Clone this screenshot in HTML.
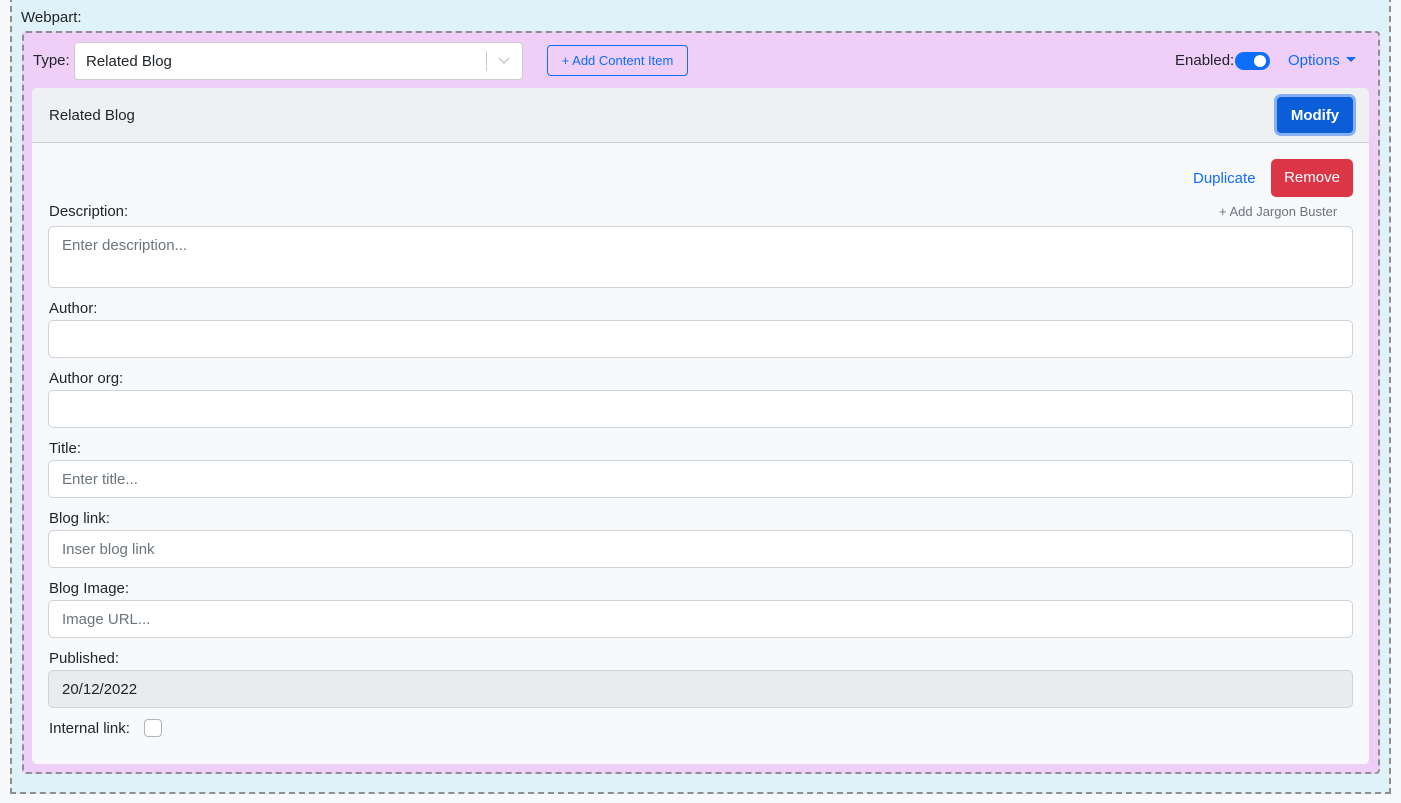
<!DOCTYPE html>
<html><head><meta charset="utf-8"><style>
*{box-sizing:border-box;margin:0;padding:0}
body{width:1401px;height:803px;background:#f8f9fa;font-family:"Liberation Sans",sans-serif;font-size:15px;color:#212529;position:relative;overflow:hidden}
.a{position:absolute}
.outer{left:10px;top:-4px;width:1381px;height:798px;border:2px dashed #8f8f8f;background:#e0f2f9}
.purple{left:22px;top:31px;width:1358px;height:743px;border:2px dashed #8f8f8f;border-radius:4px;background:#efcef8}
.card{left:32px;top:88px;width:1337px;height:676px;background:#f8f9fa;border-radius:5px;overflow:hidden}
.hdr{left:0;top:0;width:1337px;height:55px;background:#eff0f2;border-bottom:1px solid #ccc}
.inp{position:absolute;left:48px;width:1305px;height:38px;background:#fff;border:1px solid #ced4da;border-radius:5px;padding:10px 13px;color:#6c757d;font-size:15px}
.lbl{position:absolute;left:49px;font-size:15px}
</style></head><body>
<div class="a outer"></div>
<div class="a" style="left:21px;top:9px">Webpart:</div>
<div class="a purple"></div>
<div class="a" style="left:33px;top:52px">Type:</div>
<div class="a" style="left:74px;top:42px;width:449px;height:38px;background:#fff;border:1px solid #ccc;border-radius:4px;padding:10px 11px">Related Blog
<div class="a" style="left:411px;top:8px;width:1px;height:20px;background:#ccc"></div>
<svg class="a" style="left:422px;top:12px" width="14" height="12"><path d="M2 3l5 5 5-5" fill="none" stroke="#ccc" stroke-width="1.5"/></svg></div>
<div class="a" style="left:547px;top:45px;width:141px;height:31px;border:1px solid #0d6efd;border-radius:4px;color:#0d6efd;font-size:13px;text-align:center;line-height:29px">+ Add Content Item</div>
<div class="a" style="left:1175px;top:52px">Enabled:</div>
<div class="a" style="left:1235px;top:52px;width:35px;height:18px;background:#0d6efd;border-radius:9px"><div class="a" style="left:19px;top:3px;width:12px;height:12px;background:#fff;border-radius:50%"></div></div>
<div class="a" style="left:1288px;top:52px;color:#0d6efd">Options</div>
<svg class="a" style="left:1346px;top:57px" width="10" height="6"><path d="M0 0h10L5 5z" fill="#0d6efd"/></svg>
<div class="a card">
<div class="a hdr"><div class="a" style="left:17px;top:19px">Related Blog</div></div>
</div>
<div class="a" style="left:1274px;top:94px;width:82px;height:42px;border:3px solid #86b0f6;border-radius:7px;background:#0b5ed7;color:#fff;font-weight:bold;text-align:center;line-height:37px">Modify</div>
<div class="a" style="left:1193px;top:170px;color:#0d6efd">Duplicate</div>
<div class="a" style="left:1271px;top:159px;width:82px;height:38px;background:#dc3545;border-radius:5px;color:#fff;text-align:center;line-height:38px">Remove</div>
<div class="a" style="left:1219px;top:204px;font-size:13px;color:#6c757d">+ Add Jargon Buster</div>
<div class="lbl" style="top:203px">Description:</div>
<div class="inp" style="top:226px;height:62px">Enter description...</div>
<div class="lbl" style="top:300px">Author:</div>
<div class="inp" style="top:320px"></div>
<div class="lbl" style="top:370px">Author org:</div>
<div class="inp" style="top:390px"></div>
<div class="lbl" style="top:440px">Title:</div>
<div class="inp" style="top:460px">Enter title...</div>
<div class="lbl" style="top:510px">Blog link:</div>
<div class="inp" style="top:530px">Inser blog link</div>
<div class="lbl" style="top:580px">Blog Image:</div>
<div class="inp" style="top:600px">Image URL...</div>
<div class="lbl" style="top:650px">Published:</div>
<div class="inp" style="top:670px;background:#e9ecef;color:#212529">20/12/2022</div>
<div class="lbl" style="top:720px">Internal link:</div>
<div class="a" style="left:144px;top:719px;width:18px;height:18px;border:1px solid #adb5bd;border-radius:4px;background:#fff"></div>
</body></html>
